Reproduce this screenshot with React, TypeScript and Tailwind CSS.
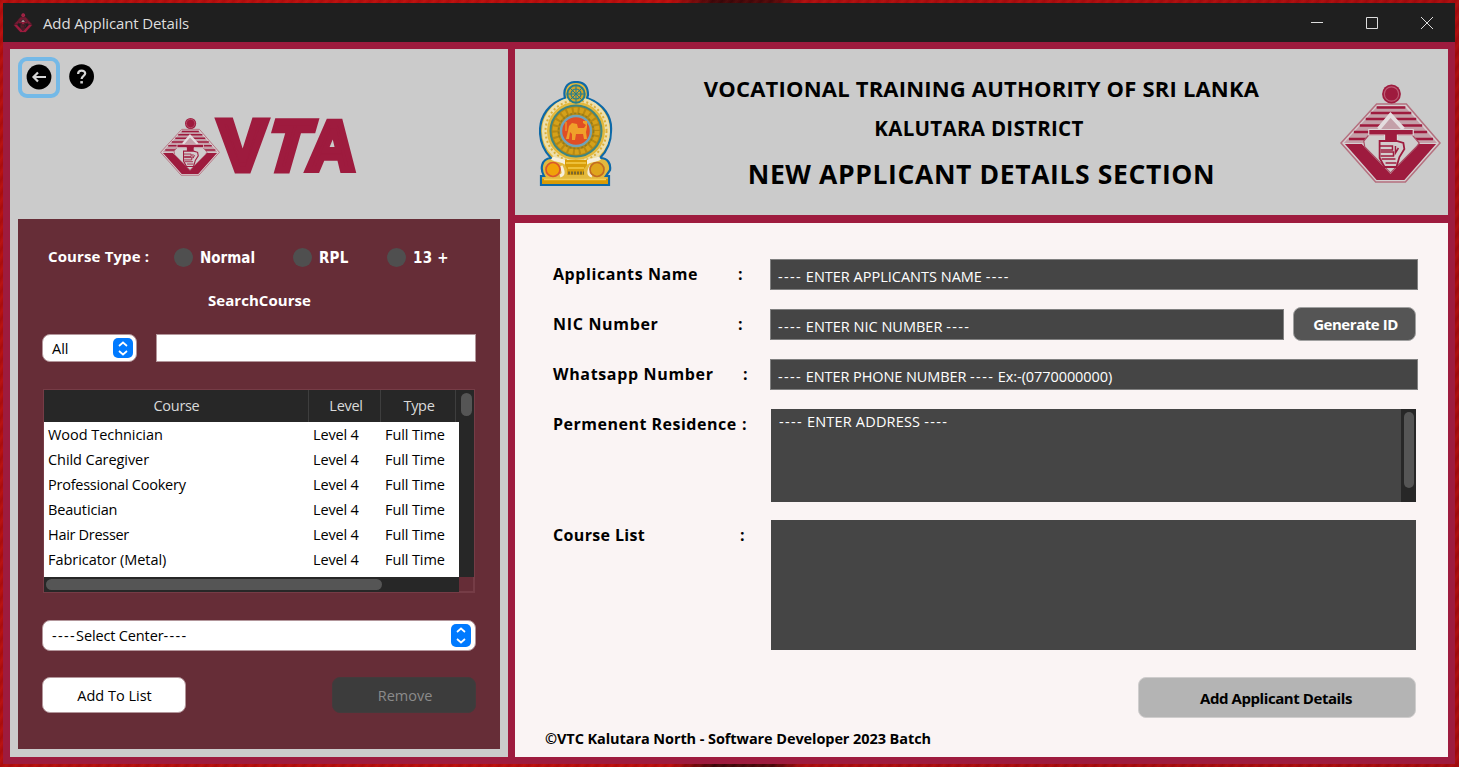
import React from "react";

const courses = [
  ["Wood Technician", "tracking-[-0.05px]"],
  ["Child Caregiver", "tracking-[-0.07px]"],
  ["Professional Cookery", "tracking-[-0.24px]"],
  ["Beautician", "tracking-[-0.15px]"],
  ["Hair Dresser", "tracking-[-0.3px]"],
  ["Fabricator (Metal)", "tracking-[-0.05px]"],
];

function VtaEmblem({ className, plain = false }: { className: string; plain?: boolean }) {
  return (
    <svg className={className} viewBox="0 0 102 102" preserveAspectRatio="none" aria-hidden="true">
      <path d="M37 21H67L101 60L66 99H36L1 60Z" fill={plain ? "#1f1f1f" : "#d6cfd1"} stroke={plain ? "#5a1b2d" : "#b5707f"} strokeWidth="1.6" />
      <path d="M38 23H65L98 60H4Z" fill={plain ? "#5a1b2d" : "#c4a0a9"} />
      <path d="M37 24.5H66M31 30H72M26 36H77M20 42.5H83M14 49H88M9 56H94" stroke="#9e1b3e" strokeWidth="2.6" />
      <path d="M5 61H22L51 91L79 61H97L65 97H37Z" fill="#9e1b3e" />
      <path d="M24 58L29 52H73L80 60L77 64L51 90L25 64Z" fill={plain ? "#1f1f1f" : "#d0cdcd"} stroke={plain ? "#1f1f1f" : "#a94c63"} strokeWidth="1.2" />
      <path d="M39 47L51 32L64 47Z" fill="#c4a0a9" />
      <path d="M39 46L51 32L64 46" fill="none" stroke={plain ? "#1f1f1f" : "#e4dddf"} strokeWidth="4" />
      <path d="M29 46.5H74V52H58V60H45V52H29Z" fill="#9e1b3e" stroke={plain ? "#1f1f1f" : "#dfd6d8"} strokeWidth="1.2" />
      <path d="M40 58H57L64 60L65 66L60 74L57 84H45L40 75Z" fill={plain ? "#1f1f1f" : "#d3cccd"} stroke="#9e1b3e" strokeWidth="1.8" />
      <path d="M40 63H53V67H41M41 69H54V73H41M42 76H56M46 80H57M56 63V70L59 65" fill="none" stroke="#9e1b3e" strokeWidth="1.5" />
      <circle cx="52" cy="11" r="9.5" fill="#9e1b3e" />
      <circle cx="52" cy="11" r="7.2" fill="none" stroke="#bc5c75" strokeWidth="1.2" />
    </svg>
  );
}

function StateEmblem() {
  return (
    <svg className="h-[105px] w-[74px]" viewBox="0 0 74 105" aria-hidden="true">
      <path
        d="M37 1C46 1 49 7 49 14L48 17C65 23 73 36 72 50C72 61 68 70 61 77C69 77 72 83 71 89L67 95H70V104H2V95H5C1 88 2 78 12 77C5 70 1 61 1 50C1 35 10 22 26 17C24 9 27 1 37 1Z"
        fill="#e3b93d"
        stroke="#0d69a8"
        strokeWidth="2.2"
      />
      <circle cx="37" cy="50" r="31.5" fill="none" stroke="#eddfac" strokeWidth="5" />
      <circle cx="37" cy="50" r="30.5" fill="none" stroke="#dcb03a" strokeWidth="2" strokeDasharray="2 2.4" />
      <circle cx="37" cy="50" r="25.5" fill="#b88913" stroke="#3f8580" strokeWidth="2" />
      <circle cx="37" cy="50" r="21" fill="none" stroke="#d5a11a" strokeWidth="5" strokeDasharray="4 2" />
      <circle cx="37" cy="50" r="17.5" fill="none" stroke="#8f7d20" strokeWidth="1.5" strokeDasharray="2 2" />
      <circle cx="37" cy="50" r="15" fill="#e14e24" stroke="#71a3b7" strokeWidth="2.4" />
      <path
        d="M30 45L33 42L38 43L39 47H45L47 44L44 42V40H48V46L47 51L48 58H45L44 53H37L36 59H33V53L31 51L30 58H27L29 50Z"
        fill="#f0a02a"
      />
      <path d="M27 41V50" stroke="#f0a02a" strokeWidth="1.2" />
      <circle cx="37" cy="13" r="8.7" fill="#d2a52a" stroke="#257d8d" strokeWidth="2" />
      <circle cx="37" cy="13" r="5" fill="none" stroke="#257d8d" strokeWidth="1.2" />
      <path d="M37 5V21M29 13H45M31 7L43 19M43 7L31 19" stroke="#257d8d" strokeWidth="1" />
      <path d="M13 77C19 80 24 79 27 82M61 77C55 80 50 79 47 82" stroke="#f6efdc" strokeWidth="4" fill="none" />
      <path d="M26 79H48V84L45 88V94H28V88L26 84Z" fill="#d89d08" />
      <path d="M27 82H47M29 87H45" stroke="#f4cc4b" strokeWidth="1.3" />
      <path d="M29 92H45" stroke="#7b682e" strokeWidth="3" strokeDasharray="2 1" />
      <path d="M22 85C25 91 25 94 21 95M52 85C49 91 49 94 53 95" stroke="#f6efdc" strokeWidth="3" fill="none" />
      <circle cx="14" cy="88.5" r="7" fill="#f1a208" stroke="#da572d" strokeWidth="1.7" />
      <circle cx="58" cy="88.5" r="7" fill="#dfa51d" stroke="#c36c22" strokeWidth="1.7" />
      <path d="M3 98H69V103H3Z" fill="#d99b05" />
      <path d="M5 98.5H67" stroke="#f4cf56" strokeWidth="1.5" />
    </svg>
  );
}

function VtaWordmark() {
  return (
    <svg className="-mt-[10px] h-[80px] w-[166px]" viewBox="-10 -10 166 80" aria-hidden="true">
      <g fill="#9e1b3e" stroke="#9e1b3e" fontFamily="Liberation Sans, sans-serif" fontWeight="700" fontSize="68" strokeWidth="7" strokeMiterlimit="2">
        <text transform="translate(5 53) scale(1.04 1.03)">V</text>
        <text transform="translate(49 53) skewX(-16) scale(.94 1.03)">T</text>
        <text transform="translate(92 53) skewX(-5) scale(.98 1.03)" strokeWidth="6">A</text>
      </g>
    </svg>
  );
}

function Stepper({ tall = false }: { tall?: boolean }) {
  return (
    <span className={tall ? "flex h-[23px] w-5 items-center justify-center rounded-[5px] bg-[#007aff]" : "flex h-5 w-5 items-center justify-center rounded-[5px] bg-[#007aff]"}>
      <svg className={tall ? "h-[17px] w-2.5" : "h-[15px] w-2.5"} viewBox={tall ? "0 0 10 17" : "0 0 10 15"} fill="none" stroke="white" strokeWidth="1.7" aria-hidden="true">
        <path d={tall ? "M1 5L5 1.5L9 5M1 12L5 15.5L9 12" : "M1 5L5 1.5L9 5M1 10L5 13.5L9 10"} />
      </svg>
    </span>
  );
}

function Radio({ label, className, text }: { label: string; className: string; text: string }) {
  return (
    <label className={`flex items-center gap-[7px] ${className}`}>
      <span className="h-[19px] w-[19px] rounded-full bg-[#4f4f4f]" />
      <span className={`pt-[2px] font-['DejaVu_Sans_Condensed','DejaVu_Sans',sans-serif] text-[15px] font-bold whitespace-nowrap ${text}`}>{label}</span>
    </label>
  );
}

function Dashes() {
  return <span className="tracking-[1.35px]">----</span>;
}

function FieldLabel({ children, width, text }: { children: string; width: string; text: string }) {
  return (
    <div className="flex w-[217px] shrink-0 items-center pb-[2px] text-[16px] leading-[30px] font-bold whitespace-nowrap text-black">
      <span className={`${width} ${text}`}>{children}</span>
      <span>:</span>
    </div>
  );
}

const field = "h-[31px] border border-[#808080] bg-[#454545] pl-[7px] text-[14.5px] leading-[33px] whitespace-nowrap text-white";

export default function App() {
  return (
    <div className="h-[767px] w-[1459px] overflow-hidden bg-[repeating-linear-gradient(125deg,#00000010_0px,#ff553514_4px,#00000010_8px),linear-gradient(90deg,#b50d0d_0%,#bd0c0c_46%,#390609_49%,#4a0709_53%,#ae0c0e_55%,#a80a0d_100%)] p-[3px] pr-1 font-['Open_Sans','Noto_Sans',sans-serif]">
      <div className="flex h-[761px] flex-col bg-[#9e1b3e]">
        <header className="flex h-[39px] shrink-0 items-center bg-[#1f1f1f] pl-[10px] text-[#dedede]">
          <VtaEmblem className="h-5 w-5" plain />
          <span className="ml-[10px] text-[15px] leading-5 tracking-[-0.13px] whitespace-nowrap">Add Applicant Details</span>
          <div className="ml-auto flex h-full items-center gap-[43px] pr-[22px]">
            <svg className="h-3 w-3" viewBox="0 0 12 12" stroke="#dddddd" aria-hidden="true"><path d="M0 5.5H12" /></svg>
            <svg className="h-3 w-3" viewBox="0 0 12 12" fill="none" stroke="#dddddd" aria-hidden="true"><path d="M.5.5H11.5V11.5H.5Z" /></svg>
            <svg className="h-3 w-3" viewBox="0 0 12 12" stroke="#dddddd" aria-hidden="true"><path d="M0 0L12 12M12 0L0 12" /></svg>
          </div>
        </header>

        <main className="flex min-h-0 flex-1 gap-[7px] p-[7px]">
          <aside className="flex w-[498px] shrink-0 flex-col bg-[#cbcbcb] p-2">
            <div className="h-[162px] shrink-0">
              <div className="flex items-center gap-[9px]">
                <button className="flex h-[41px] w-[42px] items-center justify-center rounded-[9px] border-4 border-[#74b9e7]" aria-label="Back">
                  <svg className="-mt-px h-[26px] w-[26px]" viewBox="0 0 26 26" aria-hidden="true">
                    <circle cx="13" cy="13" r="12.4" />
                    <path d="M20 13H8M12 8.5L7.5 13L12 17.5" fill="none" stroke="#d6d6d6" strokeWidth="2.2" />
                  </svg>
                </button>
                <button aria-label="Help">
                  <svg className="-mt-px h-[26px] w-[26px]" viewBox="0 0 26 26" aria-hidden="true">
                    <circle cx="12.6" cy="12.6" r="12.4" />
                    <path d="M9.1 10C9.1 5.5 16.2 5.7 16.2 9.5C16.2 11.8 12.6 11.9 12.6 14.9" fill="none" stroke="#d6d6d6" strokeWidth="2.2" />
                    <path d="M11.3 17.1H13.9V19.5H11.3Z" fill="#d6d6d6" />
                  </svg>
                </button>
              </div>
              <div className="mt-[19px] ml-[142px] flex h-[60px] items-start">
                <VtaEmblem className="h-[60px] w-[60px] shrink-0" />
                <div className="-ml-[16px]"><VtaWordmark /></div>
              </div>
            </div>

            <section className="flex flex-1 flex-col bg-[#662d37] px-[24px] pt-[27px] text-white">
              <div className="flex h-[22px] items-center">
                <span className="ml-[6px] w-[126px] pb-[2px] text-[15px] font-bold tracking-[0.13px] whitespace-nowrap">Course Type :</span>
                <Radio label="Normal" className="w-[119px]" text="tracking-[0px]" />
                <Radio label="RPL" className="w-[94px]" text="tracking-[0.2px]" />
                <Radio label="13 +" className="" text="tracking-[0.3px]" />
              </div>
              <h2 className="mt-[21px] pl-px text-center text-[15px] leading-[22px] font-bold tracking-[0.05px]">SearchCourse</h2>
              <div className="mt-[23px] flex h-7 gap-[19px]">
                <div className="flex h-7 w-[95px] items-center justify-between rounded-lg border border-[#b3969b] bg-white pr-[3px] pl-[9px] text-[14.5px] text-black">
                  <span className="pt-[2px]">All</span><Stepper />
                </div>
                <div className="h-7 w-[320px] border border-[#b3969b] bg-white" />
              </div>

              <div className="mt-[27px] ml-px grid h-[204px] w-[432px] grid-cols-[415px_15px] grid-rows-[187px_15px] border border-[#753c46] text-[14.5px]">
                <div className="bg-white">
                  <div className="flex h-8 w-[415px] bg-[#272727] text-center leading-[31px] tracking-[-0.3px] text-[#dadada]">
                    <span className="w-[265px] border-r border-[#3e3e3e] pl-px">Course</span>
                    <span className="w-[72px] border-r border-[#3e3e3e] pl-[3px]">Level</span>
                    <span className="w-[75px] border-r border-[#3e3e3e] pl-[2px]">Type</span>
                  </div>
                  {courses.map(([name, tracking]) => (
                    <div key={name} className="flex h-[25px] pl-1 leading-[25px] whitespace-nowrap text-black">
                      <span className={`w-[265px] ${tracking}`}>{name}</span>
                      <span className="w-[72px] tracking-[-0.15px]">Level 4</span>
                      <span className="tracking-[-0.1px]">Full Time</span>
                    </div>
                  ))}
                </div>
                <div className="bg-[#272727] pt-[3px] pl-[2px]"><div className="h-[23px] w-[11px] rounded-full bg-[#555555]" /></div>
                <div className="bg-[#272727] pt-[2px] pl-[2px]"><div className="h-[11px] w-[336px] rounded-full bg-[#555555]" /></div>
                <div className="border-r border-b border-[#753c46]" />
              </div>

              <div className="mt-[27px] flex h-[31px] w-[434px] items-center justify-between rounded-lg border border-[#b3969b] bg-white pr-[4px] pl-[9px] text-[14.5px] text-black">
                <span className="tracking-[-0.14px]"><Dashes />Select Center<Dashes /></span><Stepper tall />
              </div>
              <div className="mt-[26px] flex w-[434px] justify-between">
                <button className="h-9 w-[144px] rounded-lg border border-[#b3969b] bg-white pt-[2px] pl-px text-[14.5px] text-black">Add To List</button>
                <button className="h-9 w-[144px] rounded-lg border border-[#423b3c] bg-[#3c3c3c] pt-[2px] pl-[2px] text-[14.5px] text-[#8b8b8b]">Remove</button>
              </div>
            </section>
          </aside>

          <div className="flex min-w-0 flex-1 flex-col gap-2">
            <section className="flex h-[166px] shrink-0 bg-[#cbcbcb] pr-[7px] pl-6">
              <div className="pt-[32px]"><StateEmblem /></div>
              <div className="flex flex-1 flex-col items-center pt-[23px] pl-[10px] font-bold whitespace-nowrap text-black">
                <h1 className="text-[22px] leading-8 tracking-[0.19px]">VOCATIONAL TRAINING AUTHORITY OF SRI LANKA</h1>
                <h2 className="mt-[9px] pr-[5px] text-[20.5px] leading-[30px] tracking-[0.3px]">KALUTARA DISTRICT</h2>
                <h2 className="mt-[13px] text-[26.5px] leading-9 tracking-[0.62px]">NEW APPLICANT DETAILS SECTION</h2>
              </div>
              <div className="pt-[34px]"><VtaEmblem className="h-[102px] w-[101px]" /></div>
            </section>

            <section className="flex flex-1 flex-col bg-[#faf4f4] pt-[36px] pl-[38px]">
              <div className="mb-[19px] flex h-[31px]">
                <FieldLabel width="w-[185px]" text="tracking-[0.58px]">Applicants Name</FieldLabel>
                <div className={`${field} w-[648px]`}><Dashes /> ENTER APPLICANTS NAME <Dashes /></div>
              </div>
              <div className="mb-[19px] flex h-[31px]">
                <FieldLabel width="w-[185px]" text="tracking-[0.68px]">NIC Number</FieldLabel>
                <div className={`${field} w-[514px]`}><Dashes /> ENTER NIC NUMBER <Dashes /></div>
                <button className="-mt-[2px] ml-[9px] h-[34px] w-[123px] rounded-lg border border-[#a0a0a0] bg-[#555555] pl-[2px] text-[15px] font-bold tracking-[-0.45px] text-white">Generate ID</button>
              </div>
              <div className="mb-[19px] flex h-[31px]">
                <FieldLabel width="w-[190px]" text="tracking-[0.66px]">Whatsapp Number</FieldLabel>
                <div className={`${field} w-[648px] tracking-[-0.08px]`}><Dashes /> ENTER PHONE NUMBER <Dashes /> Ex:-(0770000000)</div>
              </div>
              <div className="mb-[18px] flex h-[93px] items-start">
                <FieldLabel width="w-[189px]" text="tracking-[0.5px]">Permenent Residence</FieldLabel>
                <div className="ml-px flex h-[93px] w-[645px] justify-between bg-[#454545] pl-2 text-[14.5px] leading-[26px] text-white">
                  <span className="tracking-[0.18px]"><Dashes /> ENTER ADDRESS <Dashes /></span>
                  <div className="w-[15px] bg-[#272727] pt-[3px] pl-[3px]"><div className="h-[76px] w-[10px] rounded-full bg-[#555555]" /></div>
                </div>
              </div>
              <div className="flex h-[130px] items-start">
                <FieldLabel width="w-[187px]" text="tracking-[0.35px]">Course List</FieldLabel>
                <div className="ml-px h-[130px] w-[645px] bg-[#454545]" />
              </div>
              <button className="mt-[27px] mr-8 h-[41px] w-[278px] shrink-0 self-end rounded-lg border border-[#cfcdcd] bg-[#b4b4b4] px-0 pt-px pr-[2px] text-[15px] font-bold tracking-[-0.43px] text-black">Add Applicant Details</button>
              <p className="mt-[10px] -ml-2 text-[14.5px] leading-[22px] font-bold tracking-[-0.08px] whitespace-nowrap text-black">©VTC Kalutara North - Software Developer 2023 Batch</p>
            </section>
          </div>
        </main>
      </div>
    </div>
  );
}
